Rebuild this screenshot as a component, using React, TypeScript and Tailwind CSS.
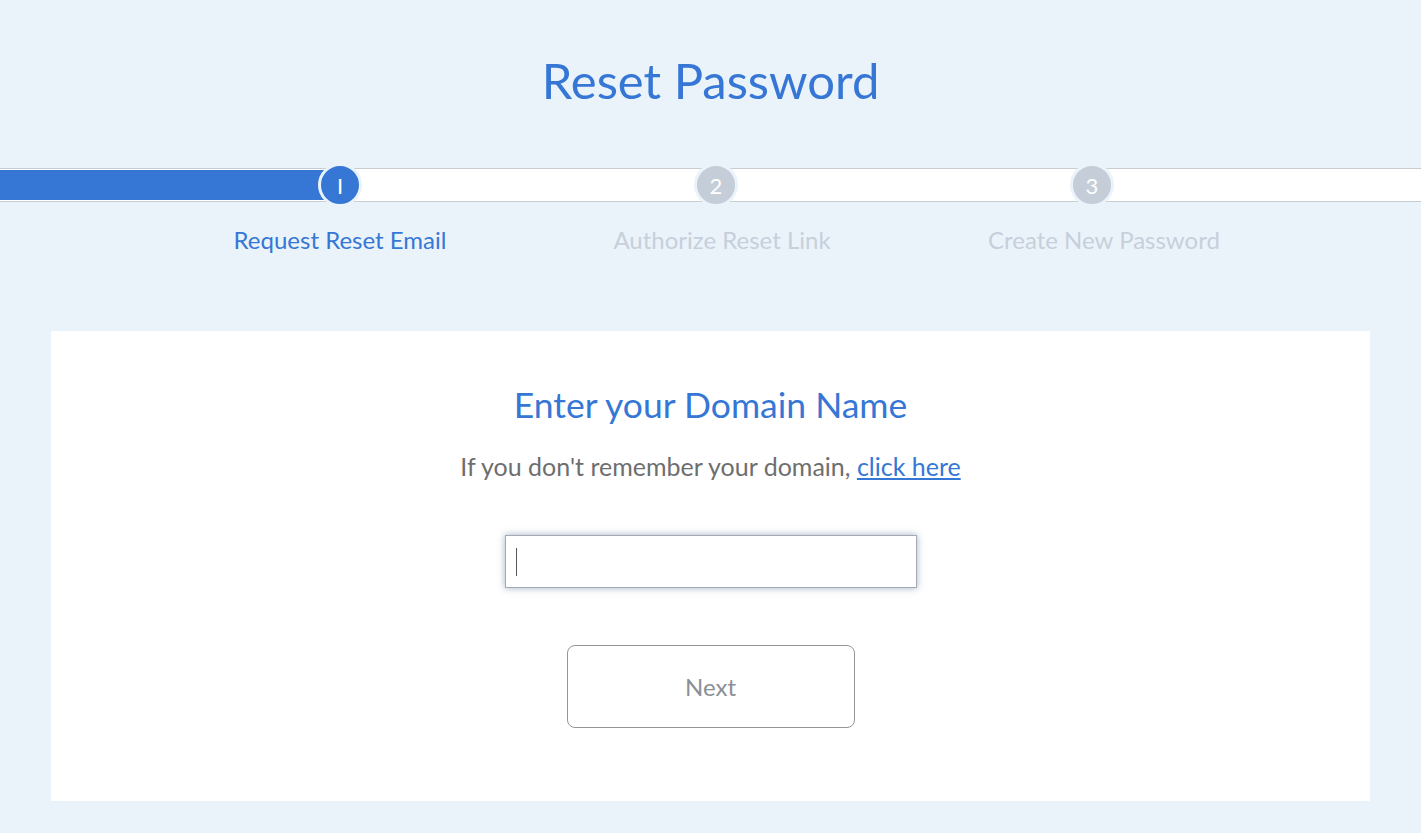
import { useState } from 'react';

const steps = [
  { n: 1, label: 'Request Reset Email' },
  { n: 2, label: 'Authorize Reset Link' },
  { n: 3, label: 'Create New Password' },
];

function Stepper({ current }: { current: number }) {
  return (
    <div>
      <div className="relative h-[34px] border-y border-[#c8cbcf] bg-white">
        <div className="absolute left-0 top-[1px] h-[30px] w-[340px] bg-[#3677d6]" />
        {steps.map((s, i) => {
          const done = s.n <= current;
          return (
            <div
              key={s.n}
              className={
                'absolute top-1/2 flex h-[44px] w-[44px] -translate-x-1/2 -translate-y-1/2 items-center justify-center rounded-full border-[3px] border-[#ebf3fa] text-[22px] text-white ' +
                (done ? 'bg-[#3677d6]' : 'bg-[#c5cdd8]')
              }
              style={{ left: 340 + i * 376 }}
            >
              {s.n === 1 ? 'I' : s.n}
            </div>
          );
        })}
      </div>
      <div className="mt-[20px] flex">
        <div className="w-[149px]" />
        {steps.map((s) => (
          <div
            key={s.n}
            className={
              'w-[382px] text-center text-[24px] leading-[36px] ' +
              (s.n <= current ? 'text-[#3677d6]' : 'text-[#c6cfda]')
            }
          >
            {s.label}
          </div>
        ))}
      </div>
    </div>
  );
}

export default function App() {
  const [domain, setDomain] = useState('');

  return (
    <div className="min-h-[833px] bg-[#ebf3fa] pb-8 font-['Lato','Noto_Sans',sans-serif]">
      <h1 className="pt-[50px] text-center text-[49px] leading-[60px] text-[#3677d6]">
        Reset Password
      </h1>
      <div className="mt-[58px]">
        <Stepper current={1} />
      </div>
      <div className="mx-[51px] mt-[73px] flex h-[470px] flex-col items-center bg-white pt-[52px]">
        <h2 className="text-[35.5px] leading-[44px] text-[#3677d6]">Enter your Domain Name</h2>
        <p className="mt-[21px] text-[25px] leading-[37px] text-[#6e6e6e]">
          If you don't remember your domain,{' '}
          <a href="#" className="text-[#3677d6] underline">
            click here
          </a>
        </p>
        <div className="relative mt-[50px]">
          <input
            value={domain}
            onChange={(e) => setDomain(e.target.value)}
            className="block h-[53px] w-[412px] border border-[#a3aab3] px-3 text-[20px] text-[#555] shadow-[0_0_7px_rgba(70,100,140,0.5)] outline-none"
          />
          {domain === '' && (
            <span className="pointer-events-none absolute left-[11px] top-[13px] h-[28px] w-px bg-[#555]" />
          )}
        </div>
        <button className="mt-[57px] h-[83px] w-[288px] rounded-[8px] border border-[#959595] bg-white text-[24px] text-[#8a9096]">
          Next
        </button>
      </div>
    </div>
  );
}
